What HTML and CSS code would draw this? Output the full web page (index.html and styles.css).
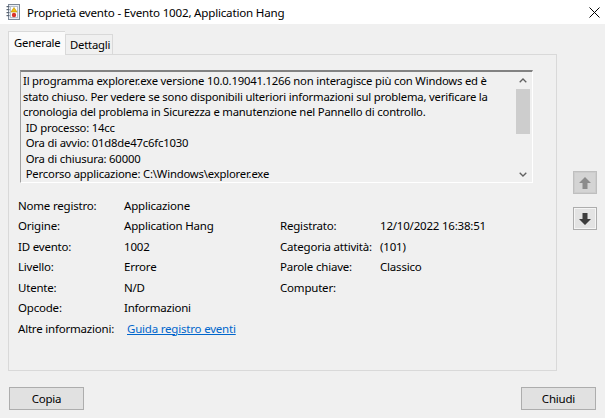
FILE: index.html
```html
<!DOCTYPE html>
<html lang="it">
<head>
<meta charset="utf-8">
<title>Proprietà evento</title>
<link rel="stylesheet" href="styles.css">
</head>
<body>
<div class="window">
  <div class="titlebar">
    <svg class="app-icon" width="14" height="16" viewBox="0 0 14 16">
      <rect x="2.5" y="0.5" width="11" height="15" fill="#e9eef5" stroke="#7b8796"/>
      <rect x="4.5" y="2.5" width="7" height="11" fill="#fff" stroke="#b7c0cc"/>
      <g fill="#5a6472">
        <rect x="0.5" y="2" width="3" height="1.2"/>
        <rect x="0.5" y="5" width="3" height="1.2"/>
        <rect x="0.5" y="8" width="3" height="1.2"/>
        <rect x="0.5" y="11" width="3" height="1.2"/>
      </g>
      <polygon points="8,3.5 11,8 5,8" fill="#f4c20d" stroke="#b38b00" stroke-width="0.6"/>
      <circle cx="8" cy="11" r="2.2" fill="#d9342b"/>
    </svg>
    <span class="title">Proprietà evento - Evento 1002, Application Hang</span>
    <svg class="close" width="11" height="11" viewBox="0 0 11 11">
      <path d="M0.5 0.5 L10.5 10.5 M10.5 0.5 L0.5 10.5" stroke="#000" stroke-width="1"/>
    </svg>
  </div>

  <div class="content">
    <div class="tabs-area">
      <div class="tabstrip">
        <div class="tab selected">Generale</div>
        <div class="tab">Dettagli</div>
        <div class="tab-fill"></div>
      </div>
      <div class="panel">
        <div class="textbox">
          <div class="textlines">
            <div class="line">Il programma explorer.exe versione 10.0.19041.1266 non interagisce più con Windows ed è</div>
            <div class="line">stato chiuso. Per vedere se sono disponibili ulteriori informazioni sul problema, verificare la</div>
            <div class="line">cronologia del problema in Sicurezza e manutenzione nel Pannello di controllo.</div>
            <div class="line"> ID processo: 14cc</div>
            <div class="line"> Ora di avvio: 01d8de47c6fc1030</div>
            <div class="line"> Ora di chiusura: 60000</div>
            <div class="line"> Percorso applicazione: C:\Windows\explorer.exe</div>
            <div class="line"> ID report: 9b7b3f2e-9811-4c9b-9083-6d3f7908a1c2</div>
          </div>
          <div class="scrollbar">
            <div class="sb-arrow">
              <svg width="8" height="5" viewBox="0 0 8 5"><path d="M0.7 4.3 L4 1 L7.3 4.3" fill="none" stroke="#606060" stroke-width="1.3"/></svg>
            </div>
            <div class="sb-track"><div class="sb-thumb"></div></div>
            <div class="sb-arrow">
              <svg width="8" height="5" viewBox="0 0 8 5"><path d="M0.7 0.7 L4 4 L7.3 0.7" fill="none" stroke="#606060" stroke-width="1.3"/></svg>
            </div>
          </div>
        </div>

        <div class="info">
          <span>Nome registro:</span><span>Applicazione</span><span></span><span></span>
          <span>Origine:</span><span>Application Hang</span><span>Registrato:</span><span>12/10/2022 16:38:51</span>
          <span>ID evento:</span><span>1002</span><span>Categoria attività:</span><span>(101)</span>
          <span>Livello:</span><span>Errore</span><span>Parole chiave:</span><span>Classico</span>
          <span>Utente:</span><span>N/D</span><span>Computer:</span><span></span>
          <span>Opcode:</span><span>Informazioni</span><span></span><span></span>
          <span>Altre informazioni:</span><a class="link" href="#">Guida registro eventi</a><span></span><span></span>
        </div>
      </div>
    </div>

    <div class="side">
      <div class="navbtn disabled">
        <svg width="14" height="14" viewBox="0 0 14 14"><path d="M7 1 L13 7 L9.5 7 L9.5 13 L4.5 13 L4.5 7 L1 7 Z" fill="#8c8c8c"/></svg>
      </div>
      <div class="navbtn">
        <svg width="14" height="14" viewBox="0 0 14 14"><path d="M7 13 L13 7 L9.5 7 L9.5 1 L4.5 1 L4.5 7 L1 7 Z" fill="#3c3c3c"/></svg>
      </div>
    </div>
  </div>

  <div class="footer">
    <button class="btn">Copia</button>
    <button class="btn">Chiudi</button>
  </div>
</div>
</body>
</html>
```

FILE: styles.css
```css
* { box-sizing: border-box; }

html, body {
  margin: 0;
  padding: 0;
  background: #f0f0f0;
}

body {
  font-family: "Segoe UI", "Noto Sans", "Open Sans", sans-serif;
  font-size: 11.3px;
  letter-spacing: -0.2px;
  color: #000;
}

.window {
  width: 605px;
  height: 418px;
  display: flex;
  flex-direction: column;
  overflow: hidden;
}

.titlebar {
  height: 24px;
  background: #fff;
  display: flex;
  align-items: center;
  padding-left: 6px;
  padding-right: 5px;
}

.app-icon { flex: none; }

.title {
  margin-left: 7px;
  flex: 1;
  font-size: 11.6px;
}

.close { flex: none; }

.content {
  display: flex;
  padding: 7px 0 0 8px;
  height: 347px;
}

.tabs-area {
  width: 549px;
  display: flex;
  flex-direction: column;
}

.tabstrip {
  display: flex;
  align-items: flex-end;
  height: 24px;
}

.tab {
  height: 21px;
  padding: 0 4px 0 4px;
  border: 1px solid #d9d9d9;
  background: #f0f0f0;
  line-height: 20px;
}

.tab.selected {
  height: 24px;
  padding: 0 8px 0 5px;
  background: #fafafa;
  border-right: none;
  border-bottom: none;
  line-height: 22px;
  width: 57px;
}

.tab:not(.selected) {
  width: 48px;
}

.tab-fill {
  flex: 1;
  border-bottom: 1px solid #d9d9d9;
}

.panel {
  flex: 1;
  border: 1px solid #d9d9d9;
  border-top: none;
  background: #f0f0f0;
  padding: 15px 0 0 11px;
}

.textbox {
  width: 513px;
  height: 113px;
  border-style: solid;
  border-width: 2px 1px 1px 1px;
  border-color: #828282 #ffffff #ffffff #a0a0a0;
  background: #f0f0f0;
  display: flex;
  overflow: hidden;
}

.textlines {
  flex: 1;
  padding: 1px 0 0 2px;
  line-height: 15.5px;
  overflow: hidden;
}

.line {
  white-space: pre;
}

.scrollbar {
  width: 16px;
  margin-right: 1px;
  display: flex;
  flex-direction: column;
  background: #f0f0f0;
}

.sb-arrow {
  height: 16px;
  display: flex;
  align-items: center;
  justify-content: center;
}

.sb-track {
  flex: 1;
  padding: 1px 1px;
}

.sb-thumb {
  height: 45px;
  background: #cdcdcd;
}

.info {
  display: grid;
  grid-template-columns: 106px 156px 100px 1fr;
  grid-auto-rows: 20.5px;
  align-items: center;
  margin: 12px 0 0 -2px;
  font-size: 11.5px;
}

.link {
  color: #0066cc;
  text-decoration: underline;
  margin-left: 3px;
}

.side {
  flex: 1;
  display: flex;
  flex-direction: column;
  align-items: flex-start;
  padding: 140px 0 0 16px;
  gap: 13px;
}

.navbtn {
  width: 24px;
  height: 23px;
  display: flex;
  align-items: center;
  justify-content: center;
  background: #e3e3e3;
  border: 1px solid #adadad;
  box-shadow: inset 0 0 0 1px #f5f5f5;
}

.navbtn.disabled {
  background: #d4d4d4;
  border-color: #bfbfbf;
  box-shadow: inset 0 0 0 1px #cccccc;
}

.footer {
  flex: 1;
  display: flex;
  justify-content: space-between;
  align-items: flex-start;
  padding: 16px 9px 0 9px;
}

.btn {
  width: 75px;
  height: 23px;
  background: #e1e1e1;
  border: 1px solid #adadad;
  border-radius: 0;
  font-family: inherit;
  font-size: 11.5px;
  letter-spacing: -0.2px;
  color: #000;
  padding: 0;
}
```
